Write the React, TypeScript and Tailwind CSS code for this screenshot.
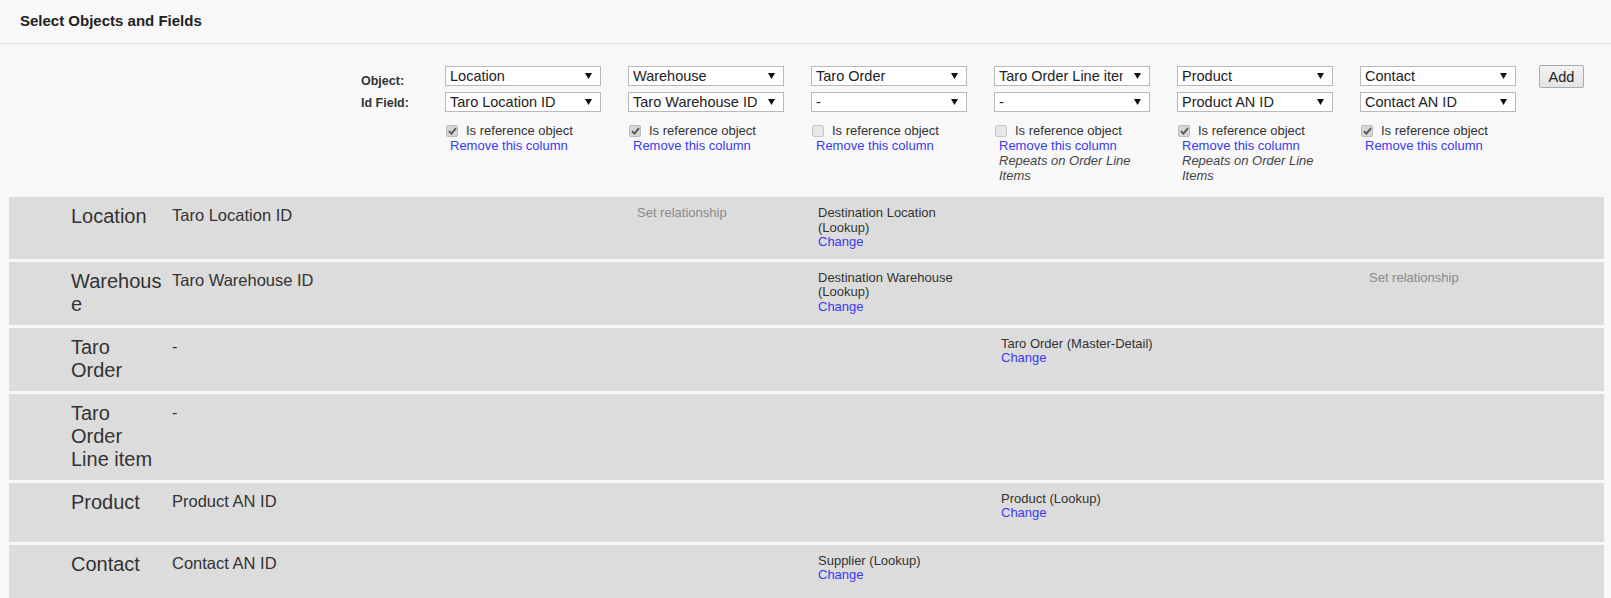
import React from "react";

type Col = {
  object: string;
  idField: string;
  isRef: boolean;
  repeats?: boolean;
};

const COLS: Col[] = [
  { object: "Location", idField: "Taro Location ID", isRef: true },
  { object: "Warehouse", idField: "Taro Warehouse ID", isRef: true },
  { object: "Taro Order", idField: "-", isRef: false },
  { object: "Taro Order Line item", idField: "-", isRef: false, repeats: true },
  { object: "Product", idField: "Product AN ID", isRef: true, repeats: true },
  { object: "Contact", idField: "Contact AN ID", isRef: true },
];

// each cell: null = empty, "set" = Set relationship placeholder, otherwise the relationship text
type Cell = null | "set" | string;

const ROWS: { label: string; id: string; cells: Cell[] }[] = [
  { label: "Location", id: "Taro Location ID", cells: [null, "set", "Destination Location (Lookup)", null, null, null] },
  { label: "Warehouse", id: "Taro Warehouse ID", cells: [null, null, "Destination Warehouse (Lookup)", null, null, "set"] },
  { label: "Taro Order", id: "-", cells: [null, null, null, "Taro Order (Master-Detail)", null, null] },
  { label: "Taro Order Line item", id: "-", cells: [null, null, null, null, null, null] },
  { label: "Product", id: "Product AN ID", cells: [null, null, null, "Product (Lookup)", null, null] },
  { label: "Contact", id: "Contact AN ID", cells: [null, null, "Supplier (Lookup)", null, null, null] },
];

function FakeSelect({ value }: { value: string }) {
  return (
    <div className="flex h-[20px] w-[156px] items-center border border-[#b9b9b9] bg-white">
      <span className="w-[128px] overflow-hidden whitespace-nowrap pl-[4px] text-[14.5px] leading-[18px] text-[#222]">
        {value}
      </span>
      <svg width="7" height="6" viewBox="0 0 7 6" className="ml-auto mr-[8px]">
        <polygon points="0,0 7,0 3.5,6" fill="#111" />
      </svg>
    </div>
  );
}

function Checkbox({ checked }: { checked: boolean }) {
  return checked ? (
    <span className="ml-[1px] flex h-[12px] w-[12px] items-center justify-center rounded-[2px] border border-[#bcbcbc] bg-[#d6d6d6]">
      <svg width="9" height="8" viewBox="0 0 9 8">
        <path d="M1 4.2 L3.4 6.6 L8 1.2" stroke="#555" strokeWidth="1.8" fill="none" />
      </svg>
    </span>
  ) : (
    <span className="ml-[1px] h-[12px] w-[12px] rounded-[2px] border border-[#c6c6c6] bg-[#e7e7e7]" />
  );
}

export default function App() {
  return (
    <div className="min-h-screen bg-[#f8f8f8] font-['Liberation_Sans',Arial,sans-serif] text-[#333]">
      <div className="flex h-[44px] items-center border-b border-[#e1e1e1] pb-[1px] pl-[20px] text-[15px] font-bold text-[#222]">
        Select Objects and Fields
      </div>

      {/* column pickers */}
      <div className="flex h-[153px] pl-[361px] pt-[22px]">
        <div className="w-[84px] pt-[4px] text-[12.5px] font-bold leading-[22px] text-[#333]">
          <div>Object:</div>
          <div>Id Field:</div>
        </div>
        <div className="flex gap-[27px]">
          {COLS.map((c) => (
            <div key={c.object} className="flex w-[156px] flex-col">
              <FakeSelect value={c.object} />
              <div className="mt-[6px]">
                <FakeSelect value={c.idField} />
              </div>
              <div className="mt-[11px] flex h-[15px] items-center">
                <Checkbox checked={c.isRef} />
                <span className="ml-[8px] text-[13px] leading-[15px] text-[#333]">Is reference object</span>
              </div>
              <div className="pl-[5px] text-[13px] leading-[15px]">
                <div className="text-[#3a3af2]">Remove this column</div>
                {c.repeats && <div className="italic text-[#444]">Repeats on Order Line Items</div>}
              </div>
            </div>
          ))}
        </div>
        <button className="ml-[23px] mt-[-1px] h-[23px] w-[45px] rounded-[2px] border border-[#ababab] bg-gradient-to-b from-[#f3f3f3] to-[#e3e3e3] text-[14.5px] leading-[20px] text-[#222]">
          Add
        </button>
      </div>

      {/* relationship grid */}
      <div className="ml-[9px] mr-[7px] flex flex-col gap-[3px]">
        {ROWS.map((r) => (
          <div key={r.label} className="flex min-h-[59px] items-start bg-[#dcdcdc] pb-[9px] pl-[62px] pt-[8px]">
            <div className="w-[101px] shrink-0 break-words pr-[8px] text-[20px] leading-[23px] text-[#333]">
              {r.label}
            </div>
            <div className="w-[273px] shrink-0 pt-[1px] text-[16.5px] leading-[19px] text-[#333]">{r.id}</div>
            {r.cells.map((cell, i) => (
              <div key={i} className="w-[183px] shrink-0 pt-[1px] text-[13px] leading-[14.5px]">
                {cell === "set" ? (
                  <div className="pl-[9px] text-[#8a8a8a]">Set relationship</div>
                ) : cell ? (
                  <div className="pl-[7px] pr-[14px] text-[#333]">
                    <div>{cell}</div>
                    <div className="text-[#3a3af2]">Change</div>
                  </div>
                ) : null}
              </div>
            ))}
          </div>
        ))}
      </div>
    </div>
  );
}
